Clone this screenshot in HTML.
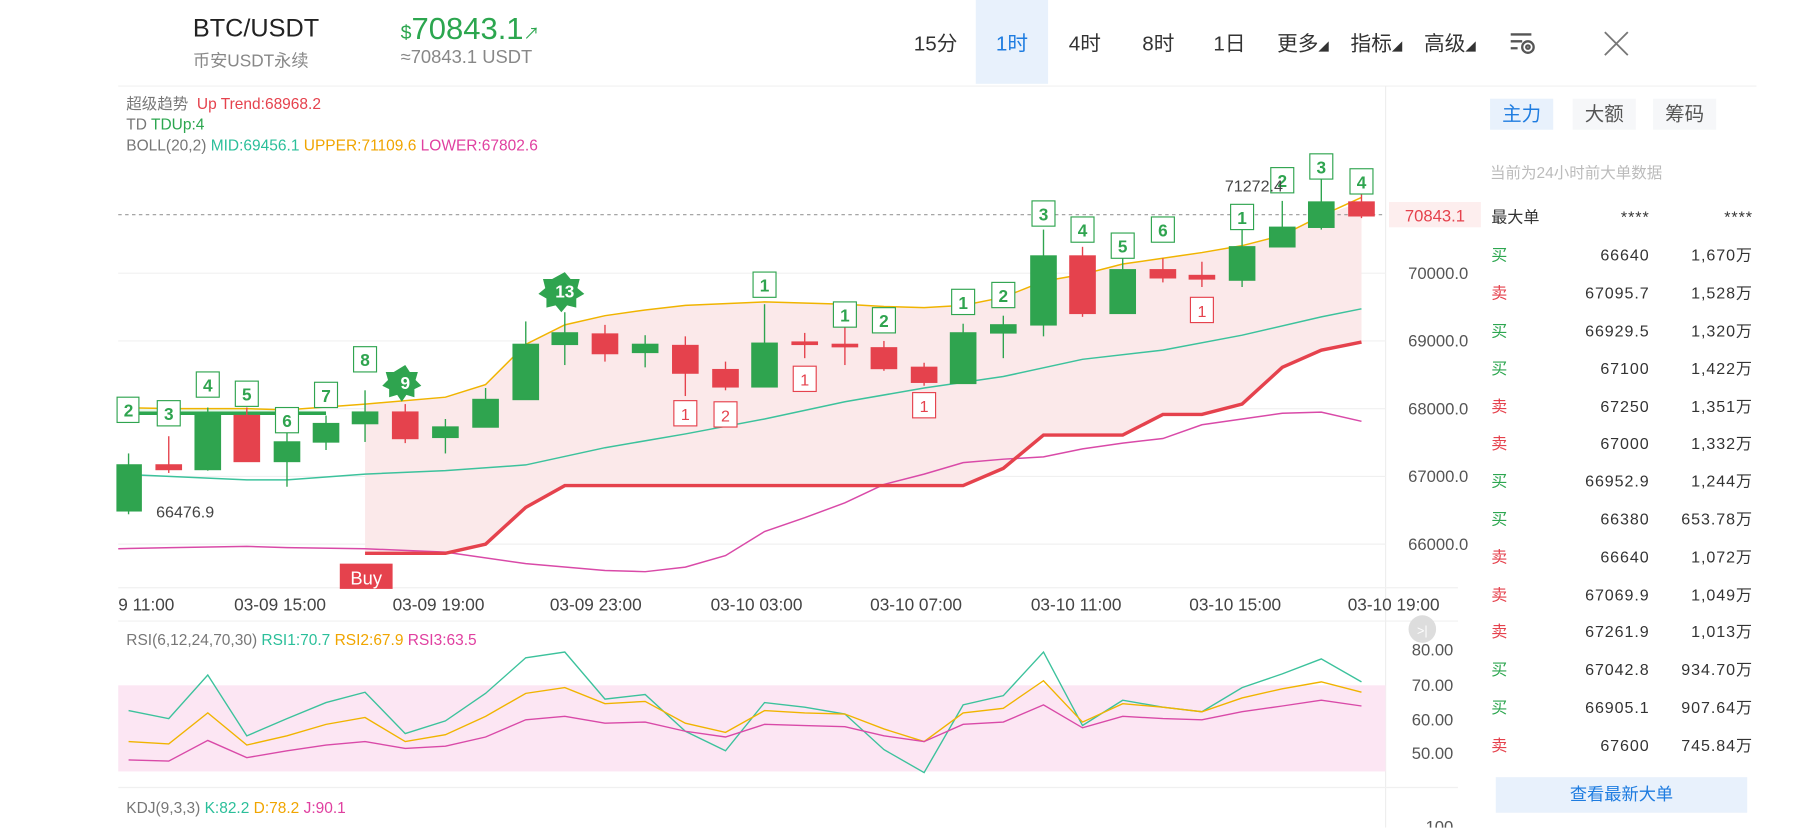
<!DOCTYPE html>
<html><head><meta charset="utf-8"><style>
html,body{margin:0;padding:0;background:#fff;overflow:hidden;width:1800px;height:828px}
#w{width:1568px;height:721px;position:relative;transform:scale(1.14796);transform-origin:0 0;font-family:"Liberation Sans","Noto Sans CJK SC",sans-serif}
.a{position:absolute;white-space:nowrap}
.tab{position:absolute;top:0;height:73px;line-height:76px;font-size:18px;color:#333;text-align:center}
.r{position:absolute;left:1299px;width:228px;height:20px;font-size:14px;color:#333;line-height:20px}
.r span{position:absolute;top:0;line-height:20px}
.r .p{right:90px;letter-spacing:0.8px}.r .m{right:0;letter-spacing:0.8px}
</style></head><body><div id="w">
<div class="a" style="left:168px;top:12px;font-size:22px;color:#222">BTC/USDT</div>
<div class="a" style="left:168px;top:42px;font-size:15px;color:#888">币安USDT永续</div>
<div class="a" style="left:349px;top:10px;font-size:27px;color:#2ca64f"><span style="font-size:17px">$</span>70843.1<span style="font-size:14px">↗</span></div>
<div class="a" style="left:349px;top:42px;font-size:16px;color:#888">≈70843.1 USDT</div>
<div style="position:absolute;left:850px;top:0;width:63px;height:73px;background:#e8f1fc"></div>
<div class="tab" style="left:790px;width:50px">15分</div>
<div class="tab" style="left:850px;width:63px;color:#1e7ce0">1时</div>
<div class="tab" style="left:920px;width:50px">4时</div>
<div class="tab" style="left:984px;width:50px">8时</div>
<div class="tab" style="left:1048px;width:46px">1日</div>
<div class="tab" style="left:1110px;width:50px">更多<span style="font-size:9px">◢</span></div>
<div class="tab" style="left:1174px;width:50px">指标<span style="font-size:9px">◢</span></div>
<div class="tab" style="left:1238px;width:50px">高级<span style="font-size:9px">◢</span></div>
<svg class="a" style="left:1314px;top:26px" width="28" height="24"><g stroke="#555" stroke-width="2" fill="none"><line x1="2" y1="4" x2="20" y2="4"/><line x1="2" y1="10" x2="12" y2="10"/><line x1="2" y1="16" x2="8" y2="16"/><circle cx="17" cy="15" r="5"/><circle cx="17" cy="15" r="1.5"/></g></svg>
<svg class="a" style="left:1396px;top:26px" width="24" height="24"><path d="M2 2L22 22M22 2L2 22" stroke="#777" stroke-width="1.6"/></svg>

<div class="a" style="left:110px;top:82px;font-size:13.5px;color:#777;line-height:18px">超级趋势 <span style="color:#e5424d">&nbsp;Up Trend:68968.2</span><br>TD <span style="color:#2ca64f">TDUp:4</span><br>BOLL(20,2) <span style="color:#2bbf9a">MID:69456.1</span> <span style="color:#f0a500">UPPER:71109.6</span> <span style="color:#e040a0">LOWER:67802.6</span></div>

<svg class="a" style="left:0;top:0" width="1568" height="721">
<line x1="103" y1="75" x2="1530" y2="75" stroke="#f0f0f0"/>
<line x1="1207" y1="75" x2="1207" y2="721" stroke="#eee"/>
<g stroke="#f0f0f0"><line x1="103" y1="238" x2="1207" y2="238"/><line x1="103" y1="297" x2="1207" y2="297"/><line x1="103" y1="356" x2="1207" y2="356"/><line x1="103" y1="415" x2="1207" y2="415"/><line x1="103" y1="474" x2="1207" y2="474"/><line x1="103" y1="512" x2="1270" y2="512"/><line x1="103" y1="541" x2="1270" y2="541"/><line x1="103" y1="686" x2="1270" y2="686"/></g>
<polygon points="103,355 150,356 215,356 284,358 284,360 103,360" fill="#e6f6ea"/>
<polygon points="318,352 388,346 423,335 458,300 492,283 527,275 562,270 597,266 666,263 736,265 805,268 839,266 874,259 909,245 943,239 978,230 1047,220 1082,214 1117,205 1151,188 1186,176 1186,298 1151,305 1117,320 1082,352 1047,361 1013,361 978,379 909,379 874,408 839,423 492,423 458,442 423,474 388,482 318,482" fill="#fbe9ea"/>
<line x1="103" y1="187" x2="1207" y2="187" stroke="#999" stroke-dasharray="3,3"/>
<polyline fill="none" stroke="#f0b400" stroke-width="1.3" points="103,355 150,356 215,356 250,357 318,352 388,346 423,335 458,300 492,283 527,275 562,270 597,266 666,263 736,265 770,267 805,268 839,266 874,259 909,245 943,239 978,230 1047,220 1082,214 1117,205 1151,188 1186,172"/>
<polyline fill="none" stroke="#3cc29c" stroke-width="1.3" points="103,413 215,418 250,418 318,413 388,410 458,405 527,390 597,378 666,365 736,350 805,338 874,328 943,313 1013,305 1082,292 1151,276 1186,269"/>
<polyline fill="none" stroke="#d94aa8" stroke-width="1.3" points="103,478 150,477 215,476 250,477 318,478 388,481 458,491 527,497 562,498 597,494 632,484 666,463 701,451 736,438 770,422 805,413 839,403 874,400 909,398 943,391 978,386 1013,382 1047,370 1082,365 1117,360 1151,359 1186,367"/>
<polyline fill="none" stroke="#2ca64f" stroke-width="3" points="103,360 284,360"/>
<polyline fill="none" stroke="#e5424d" stroke-width="3" points="318,482 388,482 423,474 458,442 492,423 839,423 874,408 909,379 978,379 1013,361 1047,361 1082,352 1117,320 1151,305 1186,298"/>
<g stroke-width="1.2">
<g fill="#2fa44f" stroke="#2fa44f">
<line x1="112" y1="395" x2="112" y2="448"/><rect x="102" y="405" width="21" height="40"/>
<line x1="181" y1="355" x2="181" y2="410"/><rect x="170" y="362" width="22" height="47"/>
<line x1="250" y1="375" x2="250" y2="424"/><rect x="239" y="385" width="22" height="17"/>
<line x1="284" y1="362" x2="284" y2="392"/><rect x="273" y="369" width="22" height="16"/>
<line x1="318" y1="340" x2="318" y2="385"/><rect x="307" y="359" width="22" height="10"/>
<line x1="388" y1="365" x2="388" y2="395"/><rect x="377" y="372" width="22" height="9"/>
<line x1="423" y1="338" x2="423" y2="372"/><rect x="412" y="348" width="22" height="24"/>
<line x1="458" y1="280" x2="458" y2="348"/><rect x="447" y="300" width="22" height="48"/>
<line x1="492" y1="272" x2="492" y2="318"/><rect x="481" y="290" width="22" height="10"/>
<line x1="562" y1="292" x2="562" y2="320"/><rect x="551" y="300" width="22" height="7"/>
<line x1="666" y1="265" x2="666" y2="337"/><rect x="655" y="299" width="22" height="38"/>
<line x1="839" y1="282" x2="839" y2="334"/><rect x="828" y="290" width="22" height="44"/>
<line x1="874" y1="275" x2="874" y2="312"/><rect x="863" y="283" width="22" height="7"/>
<line x1="909" y1="200" x2="909" y2="293"/><rect x="898" y="223" width="22" height="60"/>
<line x1="978" y1="225" x2="978" y2="273"/><rect x="967" y="235" width="22" height="38"/>
<line x1="1082" y1="200" x2="1082" y2="250"/><rect x="1071" y="215" width="22" height="29"/>
<line x1="1117" y1="175" x2="1117" y2="215"/><rect x="1106" y="198" width="22" height="17"/>
<line x1="1151" y1="155" x2="1151" y2="200"/><rect x="1140" y="176" width="22" height="22"/>
</g>
<g fill="#e5424d" stroke="#e5424d">
<line x1="147" y1="380" x2="147" y2="412"/><rect x="136" y="405" width="22" height="4"/>
<line x1="215" y1="355" x2="215" y2="402"/><rect x="204" y="362" width="22" height="40"/>
<line x1="353" y1="352" x2="353" y2="386"/><rect x="342" y="359" width="22" height="23"/>
<line x1="527" y1="283" x2="527" y2="315"/><rect x="516" y="291" width="22" height="17"/>
<line x1="597" y1="293" x2="597" y2="345"/><rect x="586" y="301" width="22" height="24"/>
<line x1="632" y1="315" x2="632" y2="340"/><rect x="621" y="322" width="22" height="15"/>
<line x1="701" y1="290" x2="701" y2="312"/><rect x="690" y="298" width="22" height="2"/>
<line x1="736" y1="285" x2="736" y2="318"/><rect x="725" y="300" width="22" height="2"/>
<line x1="770" y1="297" x2="770" y2="323"/><rect x="759" y="303" width="22" height="18"/>
<line x1="805" y1="316" x2="805" y2="336"/><rect x="794" y="320" width="22" height="13"/>
<line x1="943" y1="215" x2="943" y2="276"/><rect x="932" y="223" width="22" height="50"/>
<line x1="1013" y1="225" x2="1013" y2="246"/><rect x="1002" y="235" width="22" height="7"/>
<line x1="1047" y1="228" x2="1047" y2="250"/><rect x="1036" y="240" width="22" height="3"/>
<line x1="1186" y1="168" x2="1186" y2="190"/><rect x="1175" y="176" width="22" height="12"/>
</g></g>
<g font-size="15" font-weight="bold" text-anchor="middle" fill="#2fa44f">
<g stroke="#2fa44f" fill="#fff" stroke-width="1">
<rect x="102" y="346" width="19" height="22"/><rect x="137" y="349" width="20" height="22"/><rect x="171" y="324" width="20" height="22"/><rect x="205" y="332" width="20" height="22"/><rect x="240" y="355" width="20" height="22"/><rect x="274" y="333" width="20" height="22"/><rect x="308" y="302" width="20" height="22"/><rect x="656" y="237" width="20" height="22"/><rect x="726" y="263" width="20" height="22"/><rect x="760" y="268" width="20" height="22"/><rect x="829" y="252" width="20" height="22"/><rect x="864" y="246" width="20" height="22"/><rect x="899" y="175" width="20" height="22"/><rect x="933" y="189" width="20" height="22"/><rect x="968" y="203" width="20" height="22"/><rect x="1003" y="189" width="20" height="22"/><rect x="1072" y="178" width="20" height="22"/><rect x="1107" y="146" width="20" height="22"/><rect x="1141" y="134" width="20" height="22"/><rect x="1176" y="147" width="20" height="22"/>
</g>
<path d="M353 318l4 6 7 0-2 7 5 5-6 3 0 7-7-2-4 6-4-6-7 2 0-7-6-3 5-5-2-7 7 0z" fill="#2fa44f"/>
<path d="M492 237l5 6 8 0-2 8 6 5-7 4 0 8-8-2-5 6-5-6-8 2 0-8-7-4 6-5-2-8 8 0z" fill="#2fa44f"/>
<text x="112" y="363">2</text><text x="147" y="366">3</text><text x="181" y="341">4</text><text x="215" y="349">5</text><text x="250" y="372">6</text><text x="284" y="350">7</text><text x="318" y="319">8</text><text x="353" y="339" fill="#fff">9</text><text x="492" y="259" fill="#fff">13</text><text x="666" y="254">1</text><text x="736" y="280">1</text><text x="770" y="285">2</text><text x="839" y="269">1</text><text x="874" y="263">2</text><text x="909" y="192">3</text><text x="943" y="206">4</text><text x="978" y="220">5</text><text x="1013" y="206">6</text><text x="1082" y="195">1</text><text x="1117" y="163">2</text><text x="1151" y="151">3</text><text x="1186" y="164">4</text>
</g>
<g font-size="14" text-anchor="middle" fill="#e5424d">
<g stroke="#e5424d" fill="#fff"><rect x="587" y="349" width="20" height="22"/><rect x="622" y="350" width="20" height="22"/><rect x="691" y="319" width="20" height="22"/><rect x="795" y="342" width="20" height="22"/><rect x="1037" y="259" width="20" height="22"/></g>
<text x="597" y="366">1</text><text x="632" y="367">2</text><text x="701" y="336">1</text><text x="805" y="359">1</text><text x="1047" y="276">1</text>
</g>
<rect x="296" y="491" width="46" height="22" fill="#e5424d"/>
<text x="319" y="509" font-size="16" fill="#fff" text-anchor="middle">Buy</text>
<text x="136" y="451" font-size="14" fill="#444">66476.9</text>
<text x="1067" y="167" font-size="14" fill="#444">71272.4</text>
<rect x="1210" y="176" width="80" height="22" fill="#fdeeee"/>
<text x="1250" y="193" font-size="14.5" fill="#e5424d" text-anchor="middle">70843.1</text>
<g font-size="14.5" fill="#555" text-anchor="end"><text x="1279" y="243">70000.0</text><text x="1279" y="302">69000.0</text><text x="1279" y="361">68000.0</text><text x="1279" y="420">67000.0</text><text x="1279" y="479">66000.0</text>
<text x="1266" y="571">80.00</text><text x="1266" y="602">70.00</text><text x="1266" y="632">60.00</text><text x="1266" y="661">50.00</text><text x="1266" y="725">100</text></g>
<g font-size="15" fill="#444"><text x="103" y="532">9 11:00</text><text x="204" y="532">03-09 15:00</text><text x="342" y="532">03-09 19:00</text><text x="479" y="532">03-09 23:00</text><text x="619" y="532">03-10 03:00</text><text x="758" y="532">03-10 07:00</text><text x="898" y="532">03-10 11:00</text><text x="1036" y="532">03-10 15:00</text><text x="1174" y="532">03-10 19:00</text></g>
<circle cx="1239" cy="548" r="12" fill="#ddd"/><text x="1239" y="553" font-size="11" fill="#fff" text-anchor="middle">&gt;|</text>
<rect x="103" y="597" width="1104" height="75" fill="#fce6f3"/>
<text x="110" y="562" font-size="13.5" fill="#777">RSI(6,12,24,70,30) <tspan fill="#2bbf9a">RSI1:70.7</tspan> <tspan fill="#f0a500">RSI2:67.9</tspan> <tspan fill="#e040a0">RSI3:63.5</tspan></text>
<polyline fill="none" stroke="#3cc29c" stroke-width="1.2" points="112,619 147,626 181,588 215,641 250,626 284,612 318,603 353,639 388,628 423,604 458,573 492,568 527,609 562,605 597,637 632,654 666,612 701,616 736,622 770,653 805,673 839,614 874,606 909,568 943,632 978,610 1013,616 1047,620 1082,599 1117,587 1151,574 1186,594"/>
<polyline fill="none" stroke="#f0b400" stroke-width="1.2" points="112,646 147,648 181,621 215,649 250,641 284,631 318,625 353,646 388,640 423,624 458,604 492,599 527,613 562,611 597,630 632,638 666,619 701,621 736,622 770,635 805,646 839,621 874,617 909,593 943,629 978,613 1013,616 1047,620 1082,608 1117,600 1151,594 1186,603"/>
<polyline fill="none" stroke="#d94aa8" stroke-width="1.2" points="112,662 147,663 181,645 215,660 250,654 284,649 318,646 353,652 388,650 423,642 458,627 492,624 527,630 562,629 597,637 632,642 666,631 701,632 736,633 770,641 805,646 839,631 874,629 909,614 943,634 978,624 1013,626 1047,627 1082,620 1117,615 1151,610 1186,615"/>
<text x="110" y="708" font-size="13.5" fill="#777">KDJ(9,3,3) <tspan fill="#2bbf9a">K:82.2</tspan> <tspan fill="#f0a500">D:78.2</tspan> <tspan fill="#e040a0">J:90.1</tspan></text>
</svg>

<div class="a" style="left:1298px;top:86px;width:55px;height:27px;background:#e8f1fc;color:#1e7ce0;font-size:17px;line-height:27px;text-align:center">主力</div>
<div class="a" style="left:1370px;top:86px;width:55px;height:27px;background:#f6f7f9;color:#555;font-size:17px;line-height:27px;text-align:center">大额</div>
<div class="a" style="left:1440px;top:86px;width:55px;height:27px;background:#f6f7f9;color:#555;font-size:17px;line-height:27px;text-align:center">筹码</div>
<div class="a" style="left:1298px;top:139px;font-size:13.5px;color:#bbb">当前为24小时前大单数据</div>
<div class="r" style="top:179px"><span>最大单</span><span class="p">****</span><span class="m">****</span></div>
<div class="r" style="top:212px"><span style="color:#2ca64f">买</span><span class="p">66640</span><span class="m">1,670万</span></div>
<div class="r" style="top:245px"><span style="color:#e5424d">卖</span><span class="p">67095.7</span><span class="m">1,528万</span></div>
<div class="r" style="top:278px"><span style="color:#2ca64f">买</span><span class="p">66929.5</span><span class="m">1,320万</span></div>
<div class="r" style="top:311px"><span style="color:#2ca64f">买</span><span class="p">67100</span><span class="m">1,422万</span></div>
<div class="r" style="top:344px"><span style="color:#e5424d">卖</span><span class="p">67250</span><span class="m">1,351万</span></div>
<div class="r" style="top:376px"><span style="color:#e5424d">卖</span><span class="p">67000</span><span class="m">1,332万</span></div>
<div class="r" style="top:409px"><span style="color:#2ca64f">买</span><span class="p">66952.9</span><span class="m">1,244万</span></div>
<div class="r" style="top:442px"><span style="color:#2ca64f">买</span><span class="p">66380</span><span class="m">653.78万</span></div>
<div class="r" style="top:475px"><span style="color:#e5424d">卖</span><span class="p">66640</span><span class="m">1,072万</span></div>
<div class="r" style="top:508px"><span style="color:#e5424d">卖</span><span class="p">67069.9</span><span class="m">1,049万</span></div>
<div class="r" style="top:540px"><span style="color:#e5424d">卖</span><span class="p">67261.9</span><span class="m">1,013万</span></div>
<div class="r" style="top:573px"><span style="color:#2ca64f">买</span><span class="p">67042.8</span><span class="m">934.70万</span></div>
<div class="r" style="top:606px"><span style="color:#2ca64f">买</span><span class="p">66905.1</span><span class="m">907.64万</span></div>
<div class="r" style="top:639px"><span style="color:#e5424d">卖</span><span class="p">67600</span><span class="m">745.84万</span></div>
<div class="a" style="left:1303px;top:677px;width:219px;height:31px;background:#e8f1fc;color:#1e7ce0;font-size:15px;line-height:31px;text-align:center">查看最新大单</div>
</div></body></html>
